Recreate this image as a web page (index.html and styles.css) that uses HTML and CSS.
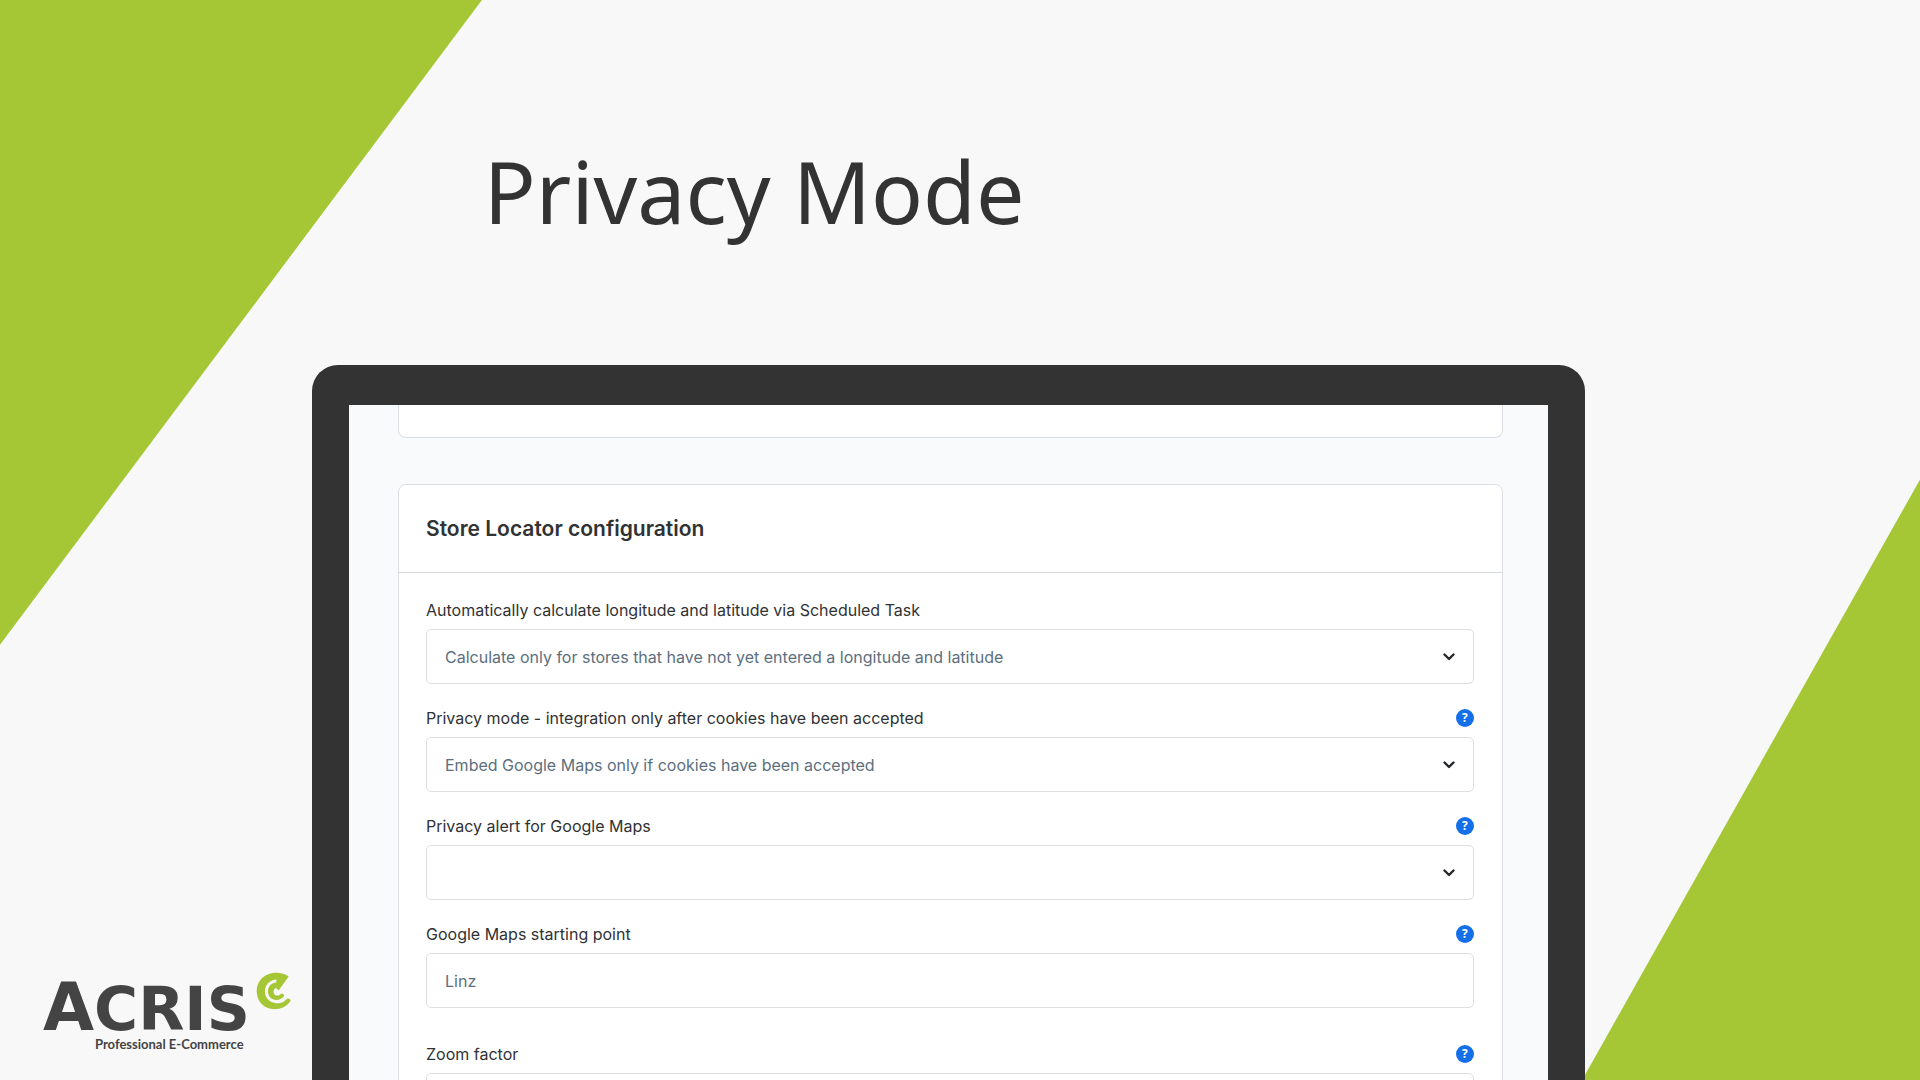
FILE: index.html
```
<!DOCTYPE html>
<html lang="en">
<head>
    <meta charset="UTF-8">
    <meta name="viewport" content="width=device-width, initial-scale=1.0">
    <title>ACRIS - Privacy Mode</title>
    <link rel="stylesheet" href="styles.css">
</head>
<body>
    <div class="slide">
        <div class="shape shape-left"></div>
        <div class="shape shape-right"></div>

        <h1 class="slide-title">Privacy Mode</h1>

        <main class="device">
            <div class="screen">
                <section class="card card-previous"></section>

                <section class="card">
                    <header class="card-header">
                        <h2>Store Locator configuration</h2>
                    </header>
                    <form class="card-body">
                        <div class="field">
                            <div class="field-label">
                                <label for="calculate">Automatically calculate longitude and latitude via Scheduled Task</label>
                            </div>
                            <div class="select">
                                <select id="calculate">
                                    <option>Calculate only for stores that have not yet entered a longitude and latitude</option>
                                </select>
                                <svg class="chevron" viewBox="0 0 12 8"><path d="M1.5 1.5 6 6l4.500-4.500"/></svg>
                            </div>
                        </div>

                        <div class="field">
                            <div class="field-label">
                                <label for="privacy">Privacy mode - integration only after cookies have been accepted</label>
                                <button type="button" class="help">?</button>
                            </div>
                            <div class="select">
                                <select id="privacy">
                                    <option>Embed Google Maps only if cookies have been accepted</option>
                                </select>
                                <svg class="chevron" viewBox="0 0 12 8"><path d="M1.5 1.5 6 6l4.500-4.500"/></svg>
                            </div>
                        </div>

                        <div class="field">
                            <div class="field-label">
                                <label for="alert">Privacy alert for Google Maps</label>
                                <button type="button" class="help">?</button>
                            </div>
                            <div class="select">
                                <select id="alert">
                                    <option></option>
                                </select>
                                <svg class="chevron" viewBox="0 0 12 8"><path d="M1.5 1.5 6 6l4.500-4.500"/></svg>
                            </div>
                        </div>

                        <div class="field field-text">
                            <div class="field-label">
                                <label for="start">Google Maps starting point</label>
                                <button type="button" class="help">?</button>
                            </div>
                            <input type="text" id="start" value="Linz">
                        </div>

                        <div class="field field-text">
                            <div class="field-label">
                                <label for="zoom">Zoom factor</label>
                                <button type="button" class="help">?</button>
                            </div>
                            <input type="text" id="zoom">
                        </div>
                    </form>
                </section>
            </div>
        </main>

        <div class="logo">
            <div class="logo-top">
                <span class="logo-name"><span class="logo-initial">A</span>CRIS</span>
                <svg class="logo-mark" viewBox="46 35 106 114">
                    <path class="mark-fill" d="M145 48C131 38 116 35 100 37C70 40 48 63 48 92C48 124 71 147 101 147C122 147 139 139 150 123C153 117 144 112 139 116C131 125 121 130 108 129C87 128 73 113 73 93C73 73 88 58 108 57L107 66C92 67 82 79 82 93C82 108 93 119 107 119C118 119 127 114 131 107C132 101 124 99 120 102C116 107 108 107 103 103C97 98 98 87 106 83L115 90Z"/>
                </svg>
            </div>
            <p class="logo-claim">Professional E-Commerce</p>
        </div>
    </div>
</body>
</html>
```
FILE: styles.css
```
* {
    margin: 0;
    padding: 0;
    box-sizing: border-box;
}

body {
    font-family: Inter, "Liberation Sans", sans-serif;
    font-size: 16px;
    color: #303234;
    background-color: #f8f8f8;
}

.slide {
    position: relative;
    height: 100vh;
    overflow: hidden;
}

/* green corners */
.shape {
    position: absolute;
    background-color: #a5c736;
}

.shape-left {
    top: 0;
    left: 0;
    width: 25.1%;
    height: 59.7%;
    clip-path: polygon(0 0, 100% 0, 0 100%);
}

.shape-right {
    right: 0;
    bottom: 0;
    width: 17.6%;
    height: 55.6%;
    clip-path: polygon(100% 0, 100% 100%, 0 100%);
}

.slide-title {
    padding: 131px 0 0 25.2%;
    height: 365px;
    font-family: "Noto Sans", "Open Sans", sans-serif;
    font-size: 86px;
    font-weight: 400;
    line-height: 120px;
    color: #333;
}

/* laptop frame */
.device {
    position: relative;
    width: 66.3%;
    margin-left: 16.25%;
    padding: 40px 37px 0;
    border-radius: 26px 26px 0 0;
    background-color: #333;
}

.screen {
    padding: 0 45px 0 49px;
    background-color: #f9fafb;
}

.card {
    border: 1px solid #dcdfe3;
    border-radius: 8px;
    background-color: #fff;
}

.card-previous {
    height: 33px;
    margin-bottom: 46px;
    border-top: none;
    border-radius: 0 0 8px 8px;
}

.card-header {
    padding: 28px 27px 27px;
    border-bottom: 1px solid #d8dbde;
}

.card-header h2 {
    font-size: 21px;
    font-weight: 600;
    line-height: 32px;
}

.card-body {
    padding: 25px 28px 25px 27px;
}

.field {
    margin-bottom: 22px;
}

.field-text {
    margin-bottom: 34px;
}

.field-label {
    display: flex;
    justify-content: space-between;
    align-items: center;
    height: 24px;
    margin-bottom: 7px;
}

.help {
    width: 18px;
    height: 18px;
    border: none;
    border-radius: 50%;
    background-color: #146fe8;
    color: #fff;
    font-family: "Open Sans", sans-serif;
    font-size: 12px;
    font-weight: 700;
    line-height: 18px;
    cursor: pointer;
}

.select {
    display: grid;
    align-items: center;
}

.select select,
.chevron {
    grid-area: 1 / 1;
}

select,
input {
    display: block;
    width: 100%;
    height: 55px;
    padding: 0 18px;
    border: 1px solid #dcdfe2;
    border-radius: 5px;
    background-color: #fff;
    color: #5c6f7e;
    font-family: inherit;
    font-size: 16px;
    appearance: none;
}

.chevron {
    justify-self: end;
    width: 12px;
    height: 8px;
    margin-right: 19px;
    fill: none;
    stroke: #26292c;
    stroke-width: 2.4;
    stroke-linecap: round;
    stroke-linejoin: round;
    pointer-events: none;
}

/* logo in the bottom corner, over the slide */
.logo {
    position: absolute;
    left: 43px;
    bottom: 27px;
    color: #444;
}

.logo-top {
    display: flex;
    align-items: flex-start;
    gap: 6px;
}

.logo-name {
    padding-top: 4px;
    font-family: "DejaVu Sans", sans-serif;
    font-size: 60px;
    font-weight: 700;
    line-height: 64px;
}

.logo-initial {
    font-size: 66px;
}

.logo-mark {
    width: 35px;
    height: 38px;
}

.mark-fill {
    fill: #a5c736;
}

.logo-claim {
    margin-top: -6px;
    padding-left: 52px;
    font-family: Lato, sans-serif;
    font-size: 13px;
    font-weight: 700;
    line-height: 18px;
}
```
